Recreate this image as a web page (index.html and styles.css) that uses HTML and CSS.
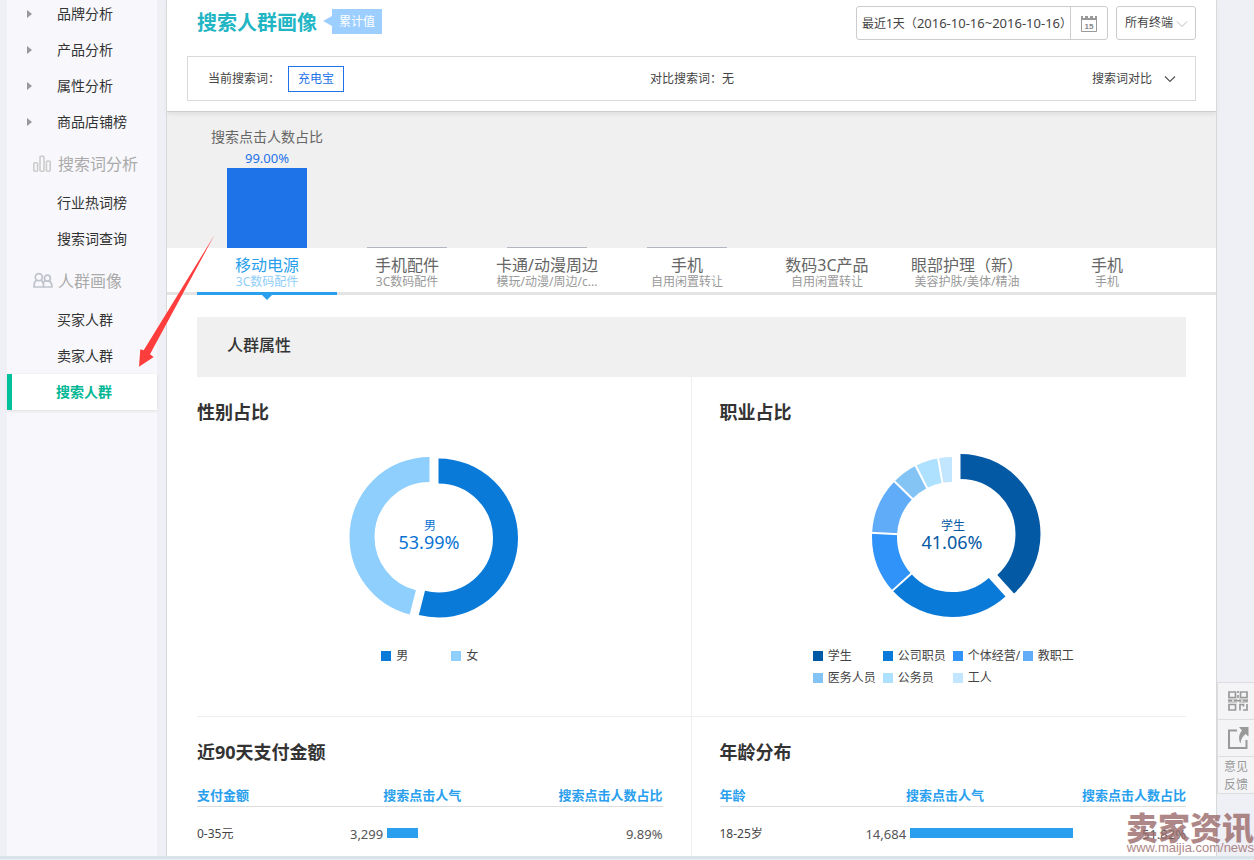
FILE: index.html
```html
<!DOCTYPE html>
<html lang="zh-CN">
<head>
<meta charset="utf-8">
<title>搜索人群画像</title>
<link rel="stylesheet" href="styles.css">
</head>
<body>
<div class="page">
  <nav class="sidebar">
    <ul class="menu">
      <li><a class="menu-link has-sub" href="#">品牌分析</a></li>
      <li><a class="menu-link has-sub" href="#">产品分析</a></li>
      <li><a class="menu-link has-sub" href="#">属性分析</a></li>
      <li><a class="menu-link has-sub" href="#">商品店铺榜</a></li>
    </ul>
    <h2 class="menu-title">
      <svg width="20" height="18" viewBox="0 0 20 18" fill="none" stroke="#ccc" stroke-width="1.6"><rect x="0.8" y="7.8" width="3.8" height="8.4" rx="1"/><rect x="7" y="1.300" width="4" height="14.900" rx="1"/><rect x="13.400" y="6" width="3.800" height="10.200" rx="1"/></svg>
      搜索词分析
    </h2>
    <ul class="menu">
      <li><a class="menu-link" href="#">行业热词榜</a></li>
      <li><a class="menu-link" href="#">搜索词查询</a></li>
    </ul>
    <h2 class="menu-title">
      <svg width="20" height="18" viewBox="0 0 20 18" fill="none" stroke="#bfc3cc" stroke-width="1.7"><circle cx="5.8" cy="5.2" r="3.5"/><path d="M3.5 8.2C1.8 9.2 1 10.7 1 13.9V15h9.6v-1.1c0-3.2-.8-4.7-2.5-5.7"/><circle cx="14.4" cy="6.2" r="3"/><path d="M12.500 8.900C11.600 9.200 10.900 9.700 10.400 10.500M16 8.900c1.900 1 2.900 2.500 2.900 5V15h-8"/></svg>
      人群画像
    </h2>
    <ul class="menu">
      <li><a class="menu-link" href="#">买家人群</a></li>
      <li><a class="menu-link" href="#">卖家人群</a></li>
      <li><a class="menu-link active" href="#">搜索人群</a></li>
    </ul>
  </nav>

  <main class="main">
    <header class="header">
      <div class="title-row">
        <h1 class="title">搜索人群画像</h1>
        <span class="tag">累计值</span>
        <button class="date" type="button">
          <span class="date-text">最近1天（<span class="date-range">2016-10-16~2016-10-16</span>）</span>
          <span class="date-icon">
            <svg width="18" height="20" viewBox="0 0 18 20"><path d="M1.500 5.500V18.500h15V5.500" fill="none" stroke="#999" stroke-width="1"/><path d="M1 3h2v2h2V3h3v2h2V3h3v2h2V3h2v4H1z" fill="#999"/><text class="cal-text" x="9" y="16" text-anchor="middle">15</text></svg>
          </span>
        </button>
        <div class="terminal">
          <select class="terminal-select" aria-label="终端"><option>所有终端</option></select>
          <svg class="terminal-arrow" width="12" height="8" viewBox="0 0 12 8" fill="none" stroke="#bbb"><path d="M1 1.500l5 5 5-5"/></svg>
        </div>
      </div>
      <div class="filter">
        <span class="filter-part">当前搜索词：<button class="keyword" type="button">充电宝</button></span>
        <span>对比搜索词：无</span>
        <button class="compare" type="button">搜索词对比
          <svg width="12" height="8" viewBox="0 0 12 8" fill="none" stroke="#555" stroke-width="1.200"><path d="M1 1.500l5 5 5-5"/></svg>
        </button>
      </div>
    </header>

    <div class="bars">
      <div class="bar-col"><span class="bar-title">搜索点击人数占比</span><span class="bar-value">99.00%</span><span class="bar big"></span></div>
      <div class="bar-col"><span class="bar"></span></div>
      <div class="bar-col"><span class="bar"></span></div>
      <div class="bar-col"><span class="bar"></span></div>
    </div>
    <div class="tabs">
      <button class="tab active" type="button"><span class="tab-name">移动电源</span><span class="tab-sub">3C数码配件</span></button>
      <button class="tab" type="button"><span class="tab-name">手机配件</span><span class="tab-sub">3C数码配件</span></button>
      <button class="tab" type="button"><span class="tab-name">卡通/动漫周边</span><span class="tab-sub">模玩/动漫/周边/c...</span></button>
      <button class="tab" type="button"><span class="tab-name">手机</span><span class="tab-sub">自用闲置转让</span></button>
      <button class="tab" type="button"><span class="tab-name">数码3C产品</span><span class="tab-sub">自用闲置转让</span></button>
      <button class="tab" type="button"><span class="tab-name">眼部护理（新）</span><span class="tab-sub">美容护肤/美体/精油</span></button>
      <button class="tab" type="button"><span class="tab-name">手机</span><span class="tab-sub">手机</span></button>
    </div>

    <section class="content">
      <h2 class="section-title">人群属性</h2>
      <div class="row">
        <div class="cell">
          <h3 class="cell-title">性别占比</h3>
          <svg class="donut" width="180" height="180" viewBox="0 0 180 180">
            <g fill="none" stroke-width="25">
              <circle cx="89.500" cy="87" r="67.500" pathLength="360" stroke="#8fcffd" stroke-dasharray="165.600 194.400" stroke-dashoffset="-194.400" transform="rotate(-90 89.500 87)"/>
              <circle cx="98.500" cy="88" r="67" pathLength="360" stroke="#0a7ad9" stroke-dasharray="194.400 165.600" transform="rotate(-90 98.500 88)"/>
            </g>
            <g fill="#0a73d4" text-anchor="middle"><text class="donut-name" x="90" y="80">男</text><text class="donut-value" x="89" y="99">53.99%</text></g>
          </svg>
          <ul class="legend two">
            <li><i class="swatch c2"></i>男</li>
            <li><i class="swatch c8"></i>女</li>
          </ul>
        </div>
        <div class="cell">
          <h3 class="cell-title">职业占比</h3>
          <svg class="donut" width="180" height="180" viewBox="0 0 180 180">
            <g fill="none" stroke-width="25" transform="rotate(-90 89 87)">
              <circle cx="89" cy="87" r="67.500" pathLength="360" stroke="#0a7ad9" stroke-dasharray="90 270" stroke-dashoffset="-138"/>
              <circle cx="89" cy="87" r="67.500" pathLength="360" stroke="#3093fa" stroke-dasharray="45 315" stroke-dashoffset="-228"/>
              <circle cx="89" cy="87" r="67.500" pathLength="360" stroke="#60acf8" stroke-dasharray="41 319" stroke-dashoffset="-273"/>
              <circle cx="89" cy="87" r="67.500" pathLength="360" stroke="#84c4f4" stroke-dasharray="19 341" stroke-dashoffset="-314"/>
              <circle cx="89" cy="87" r="67.500" pathLength="360" stroke="#aee1ff" stroke-dasharray="17 343" stroke-dashoffset="-333"/>
              <circle cx="89" cy="87" r="67.500" pathLength="360" stroke="#c2e6ff" stroke-dasharray="10 350" stroke-dashoffset="-350"/>
            </g>
            <g stroke="#fff" stroke-width="2">
              <path d="M89 34V5" transform="rotate(228 89 87)"/>
              <path d="M89 34V5" transform="rotate(273 89 87)"/>
              <path d="M89 34V5" transform="rotate(314 89 87)"/>
              <path d="M89 34V5" transform="rotate(333 89 87)"/>
              <path d="M89 34V5" transform="rotate(350 89 87)"/>
            </g>
            <circle cx="97.500" cy="84" r="67.500" pathLength="360" fill="none" stroke="#0459a4" stroke-width="25" stroke-dasharray="138 222" transform="rotate(-90 97.500 84)"/>
            <g fill="#0459a4" text-anchor="middle"><text class="donut-name" x="90" y="80">学生</text><text class="donut-value" x="89" y="99">41.06%</text></g>
          </svg>
          <ul class="legend">
            <li><i class="swatch c1"></i>学生</li>
            <li><i class="swatch c2"></i>公司职员</li>
            <li><i class="swatch c3"></i>个体经营/</li>
            <li><i class="swatch c4"></i>教职工</li>
            <li><i class="swatch c5"></i>医务人员</li>
            <li><i class="swatch c6"></i>公务员</li>
            <li><i class="swatch c7"></i>工人</li>
          </ul>
        </div>
      </div>
      <div class="row">
        <div class="cell">
          <h3 class="cell-title">近90天支付金额</h3>
          <table class="table">
            <thead><tr><th class="col-name" colspan="2">支付金额</th><th>搜索点击人气</th><th class="right">搜索点击人数占比</th></tr></thead>
            <tbody><tr><td class="name">0-35元</td><td class="num right">3,299</td><td><span class="meter" style="width:31px"></span></td><td class="num right">9.89%</td></tr></tbody>
          </table>
        </div>
        <div class="cell">
          <h3 class="cell-title">年龄分布</h3>
          <table class="table">
            <thead><tr><th class="col-name" colspan="2">年龄</th><th>搜索点击人气</th><th class="right">搜索点击人数占比</th></tr></thead>
            <tbody><tr><td class="name">18-25岁</td><td class="num right">14,684</td><td><span class="meter" style="width:163px"></span></td><td class="num right">51.82%</td></tr></tbody>
          </table>
        </div>
      </div>
    </section>
  </main>
</div>
<div class="bottom-strip"></div>

<aside class="tools">
  <button class="tool" type="button" aria-label="二维码">
    <svg width="22" height="22" viewBox="0 0 22 22" fill="none"><path d="M1 9.500h9M12 9.500h9M1 12h9M12 12h9" stroke="#ccc" stroke-width="2"/><path d="M2 2h6.500v5.500H2zM13.500 2H20v5.500h-6.500zM2 14.500h6.500V20H2zM13 20.500v-6h3.500v2M20 14v6h-4M11 1v2M11 5v3M1 10.700h4M7 10.700h7M16 10.700h5" stroke="#999" stroke-width="1.700"/></svg>
  </button>
  <button class="tool" type="button" aria-label="分享">
    <svg width="22" height="24" viewBox="0 0 22 24"><path d="M10 4.500H2V22h17.500V14" fill="none" stroke="#999" stroke-width="2"/><path d="M12 1h9.500v9.500l-3-2.500c-3 2.500-4.500 5-5 9.500-2.500-5-1.500-9.500 1.500-13z" fill="#999"/></svg>
  </button>
  <button class="tool tool-text" type="button">意见<br>反馈</button>
</aside>

<svg class="pointer" width="80" height="136" viewBox="0 0 80 136"><path d="M77.500 3L13 122.300l3.700 2.700L2 134.700l1.300-17.400 3.400 1z" fill="#ff3d3d"/></svg>

<div class="watermark"><span class="wm-name">卖家资讯</span><span class="wm-url">www.maijia.com/news</span></div>
</body>
</html>
```
FILE: styles.css
```css
* { box-sizing: border-box; }

body {
  margin: 0;
  min-height: 100vh;
  display: flex;
  flex-direction: column;
  position: relative;
  overflow-x: hidden;
  background: #efeff6;
  color: #444;
  font: 12px/18px "Noto Sans", "Noto Sans CJK SC", sans-serif;
}

h1, h2, h3, ul { margin: 0; padding: 0; list-style: none; font-weight: 400; }

button, select {
  margin: 0;
  padding: 0;
  border: 0;
  background: none;
  color: inherit;
  font: inherit;
  cursor: pointer;
}

.page { flex: 1; display: flex; padding: 0 37px 0 7px; }

.sidebar { flex: none; width: 150px; margin-right: 9px; background: #f8f8fc; }
.sidebar .menu:first-child { margin-top: -4px; }
.menu-link {
  display: flex;
  align-items: center;
  height: 36px;
  padding-left: 50px;
  color: #333;
  font-size: 14px;
  text-decoration: none;
}
.menu-link.has-sub { padding-left: 20px; }
.menu-link.has-sub::before {
  content: "";
  margin-right: 25px;
  border: 4px solid transparent;
  border-left: 5px solid #999;
  border-right-width: 0;
}
.menu-link.active {
  padding-left: 44px;
  border-left: 5px solid #00c19b;
  background: #fff;
  box-shadow: 0 1px 3px #ddd;
  color: #00b795;
  font-weight: 700;
}
.menu-title {
  display: flex;
  align-items: center;
  gap: 5px;
  height: 24px;
  margin: 12px 0 9px;
  padding-left: 26px;
  color: #aaa;
  font-size: 16px;
}

.main {
  flex: 1;
  min-width: 0;
  display: flex;
  flex-direction: column;
  border: solid #d8d8d8;
  border-width: 0 1px;
  background: #fff;
}

.header {
  position: relative;
  padding: 6px 20px 10px;
  border-bottom: 1px solid #ccc;
  box-shadow: 0 2px 4px #ddd;
}
.title-row { display: flex; align-items: center; height: 34px; margin-bottom: 16px; }
.title { margin-left: 10px; color: #22b5c4; font-size: 20px; line-height: 30px; font-weight: 700; }
.tag {
  position: relative;
  margin: 0 auto 4px 15px;
  height: 25px;
  padding: 0 7px;
  background: #9cceff;
  color: #fff;
  line-height: 25px;
}
.tag::before {
  content: "";
  position: absolute;
  left: -9px;
  top: 7px;
  border: 5px solid transparent;
  border-right: 9px solid #9cceff;
  border-left: 0;
}
.date {
  display: flex;
  height: 34px;
  margin-right: 8px;
  border: 1px solid #ccc;
  border-radius: 3px;
  line-height: 32px;
}
.date-text { width: 213px; padding-left: 5px; text-align: center; white-space: nowrap; }
.date-range { font-size: 13px; }
.date-icon { display: flex; align-items: center; justify-content: center; width: 37px; border-left: 1px solid #ccc; }
.cal-text { fill: #888; font: 700 8px "Liberation Sans", sans-serif; }
.terminal { position: relative; }
.terminal-select {
  width: 80px;
  height: 34px;
  padding-left: 8px;
  border: 1px solid #ccc;
  border-radius: 3px;
  appearance: none;
}
.terminal-arrow { position: absolute; right: 8px; top: 14px; pointer-events: none; }

.filter {
  display: grid;
  grid-template-columns: 1fr auto 1fr;
  align-items: center;
  height: 45px;
  padding: 0 19px 0 20px;
  border: 1px solid #d9d9d9;
}
.filter-part { display: flex; align-items: center; gap: 8px; }
.keyword { width: 56px; height: 26px; border: 1px solid #1f73e8; color: #1f73e8; }
.compare { display: flex; align-items: center; justify-self: end; gap: 12px; }

.bars, .tabs { display: grid; grid-template-columns: repeat(7, 140px); padding: 0 30px; }
.bars { height: 136px; background: #f0f0f0; }
.bar-col { display: flex; flex-direction: column; align-items: center; justify-content: flex-end; }
.bar-title { color: #666; font-size: 14px; line-height: 22px; }
.bar-value { color: #1f73e8; font-size: 13px; line-height: 20px; }
.bar { width: 80px; height: 1px; background: #b0b5c0; }
.bar.big { height: 80px; background: #1f73e8; }

.tabs { border-bottom: 3px solid #e4e4e4; }
.tab {
  position: relative;
  display: flex;
  flex-direction: column;
  align-items: center;
  height: 47px;
  margin-bottom: -3px;
  padding-top: 8px;
  color: #666;
}
.tab-name { font-size: 16px; line-height: 18px; white-space: nowrap; }
.tab-sub { color: #999; line-height: 16px; white-space: nowrap; }
.tab.active { border-bottom: 3px solid #2a9fed; color: #2a9fed; }
.tab.active .tab-sub { color: #8fcdf8; }
.tab.active::after {
  content: "";
  position: absolute;
  left: 65px;
  top: 47px;
  border: 5px solid transparent;
  border-top-color: #2a9fed;
  border-bottom: 0;
}

.content { flex: 1; display: flex; flex-direction: column; padding: 22px 30px 0; }
.section-title {
  height: 60px;
  padding-left: 30px;
  background: #f0f0f0;
  color: #333;
  font-size: 16px;
  font-weight: 500;
  line-height: 56px;
}
.row { display: grid; grid-template-columns: 1fr 1fr; }
.row + .row { flex: 1; border-top: 1px solid #eee; }
.cell { padding: 22px 28px 0 0; border-right: 1px solid #eee; }
.cell + .cell { padding: 22px 0 0 28px; border-right: 0; }
.cell-title { color: #333; font-size: 18px; line-height: 26px; font-weight: 700; }

.donut { display: block; margin: 25px auto 15px; }
.donut-name { font-size: 12px; }
.donut-value { font-size: 18px; }

.legend {
  display: grid;
  grid-template-columns: repeat(4, 70px);
  justify-content: center;
  padding-bottom: 27px;
  line-height: 22px;
}
.legend.two { grid-template-columns: 70px auto; }
.legend li { display: flex; align-items: center; gap: 5px; white-space: nowrap; }
.swatch { flex: none; width: 10px; height: 10px; }
.c1 { background: #0459a4; }
.c2 { background: #0a7ad9; }
.c3 { background: #3093fa; }
.c4 { background: #60acf8; }
.c5 { background: #84c4f4; }
.c6 { background: #aee1ff; }
.c7 { background: #c2e6ff; }
.c8 { background: #8fcffd; }

.table { width: 100%; margin-top: 20px; border-collapse: collapse; table-layout: fixed; }
.table th {
  padding: 0 0 1px;
  border-bottom: 1px solid #ddd;
  color: #2a9fed;
  font-size: 13px;
  line-height: 20px;
  text-align: left;
  white-space: nowrap;
}
.table .col-name { width: 40%; }
.table td { padding: 17px 0 0; line-height: 20px; }
.table .num { color: #555; font-size: 13px; }
.table .right { text-align: right; }
.meter { display: block; height: 10px; margin: 0 0 2px 4px; background: #2a9fed; }

.bottom-strip { height: 4px; border-bottom: 1px solid #e8eff2; background: #d8e3ea; }

.tools { position: absolute; right: 0; bottom: 66px; width: 37px; border: 1px solid #ddd; border-width: 0 0 1px 1px; background: #f4f4f7; }
.tool {
  display: flex;
  align-items: center;
  justify-content: center;
  width: 100%;
  height: 37px;
  padding-left: 4px;
  border-top: 1px solid #ddd;
  color: #999;
}
.tool-text { padding: 2px 0 0; }
.pointer { position: absolute; left: 137px; top: 232px; }

.watermark { position: absolute; right: 0; bottom: 4px; color: #9b6b6b; opacity: 0.8; white-space: nowrap; pointer-events: none; }
.wm-name { display: block; text-align: right; font: 900 32px/28px "Noto Sans CJK SC", sans-serif; }
.wm-url { display: block; text-align: right; font: 13px/16px "Liberation Sans", sans-serif; }
```
